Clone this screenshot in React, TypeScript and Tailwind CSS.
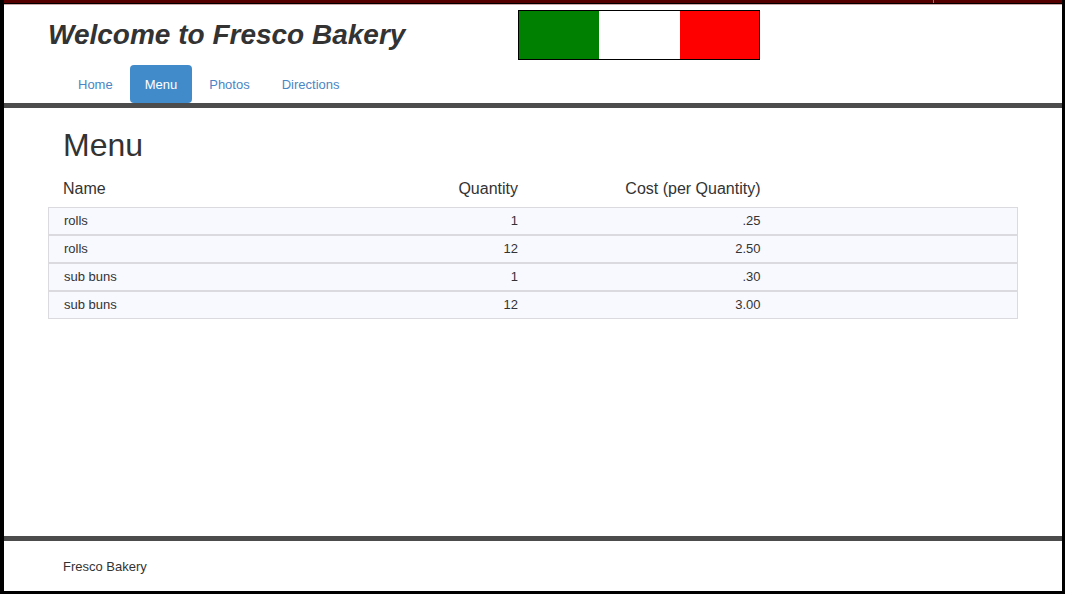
const links = ["Home", "Menu", "Photos", "Directions"];

const items = [
  { name: "rolls", quantity: "1", cost: ".25" },
  { name: "rolls", quantity: "12", cost: "2.50" },
  { name: "sub buns", quantity: "1", cost: ".30" },
  { name: "sub buns", quantity: "12", cost: "3.00" },
];

function Flag() {
  return (
    <div
      role="img"
      aria-label="Italian flag"
      className="grid h-[50px] w-[242px] grid-cols-[80px_81px_1fr] border border-black"
    >
      <div className="bg-[#008000]" />
      <div className="bg-white" />
      <div className="bg-[#ff0000]" />
    </div>
  );
}

function Header() {
  return (
    <header className="border-t border-b-5 border-t-[#d0a8a8] border-b-[#4c4c4c]">
      <div className="mx-auto max-w-[970px]">
        <div className="flex items-start pt-[5px]">
          <h1 className="w-[470px] pt-[5px] text-[28px] leading-10 font-bold italic">Welcome to Fresco Bakery</h1>
          <Flag />
        </div>
        <nav className="px-[15px] pt-[5px]">
          <ul className="flex gap-0.5">
            {links.map((link) => (
              <li key={link}>
                <a
                  href={"#" + link.toLowerCase()}
                  aria-current={link === "Menu" ? "page" : undefined}
                  className={
                    link === "Menu"
                      ? "block rounded bg-[#428bca] px-[15px] pt-[10px] pb-2 leading-5 text-white"
                      : "block rounded px-[15px] pt-[10px] pb-2 leading-5 text-[#4a86c4]"
                  }
                >
                  {link}
                </a>
              </li>
            ))}
          </ul>
        </nav>
      </div>
    </header>
  );
}

function MenuTable() {
  return (
    <table className="w-full table-fixed border-separate border-spacing-0">
      <thead>
        <tr className="text-base leading-5">
          <th scope="col" className="w-1/4 px-[15px] pt-2 pb-2 text-left font-normal">Name</th>
          <th scope="col" className="w-1/4 px-[15px] pt-2 pb-2 text-right font-normal">Quantity</th>
          <th scope="col" className="w-1/4 px-[15px] pt-2 pb-2 text-right font-normal">Cost (per Quantity)</th>
          <td className="w-1/4" />
        </tr>
      </thead>
      <tbody>
        {items.map((item, i) => (
          <tr key={i} className="bg-[#f8f8ff] leading-5">
            <td className="border-y border-l border-[#dadadf] px-[15px] py-[3px]">{item.name}</td>
            <td className="border-y border-[#dadadf] px-[15px] py-[3px] text-right">{item.quantity}</td>
            <td className="border-y border-[#dadadf] px-[15px] py-[3px] text-right">{item.cost}</td>
            <td className="border-y border-r border-[#dadadf]" />
          </tr>
        ))}
      </tbody>
    </table>
  );
}

export default function App() {
  return (
    <div className="flex min-h-screen flex-col border-x-4 border-r-3 border-b-3 border-black bg-white font-['Liberation_Sans',Arial,sans-serif] text-[13px] text-[#333333]">
      <div className="flex h-1 justify-end border-b border-black bg-[#550000] pr-32">
        <div className="w-px bg-[#a07070]" />
      </div>
      <Header />
      <main className="flex-1">
        <div className="mx-auto max-w-[970px] pt-[17px]">
          <h2 className="px-[15px] pb-[6px] text-[32px] leading-10">Menu</h2>
          <MenuTable />
        </div>
      </main>
      <footer className="border-t-5 border-[#4c4c4c]">
        <p className="mx-auto max-w-[970px] px-[15px] pt-4 pb-[14px] leading-5">Fresco Bakery</p>
      </footer>
    </div>
  );
}
